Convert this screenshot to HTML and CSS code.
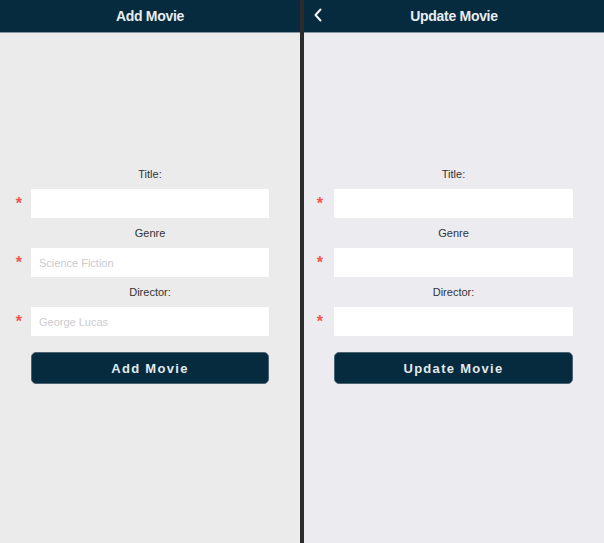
FILE: index.html
```html
<!DOCTYPE html>
<html>
<head>
<meta charset="utf-8">
<link rel="stylesheet" href="styles.css">
</head>
<body>
<div class="screens">
  <section class="panel panel-add">
    <header class="bar">
      <h1 class="bar-title">Add Movie</h1>
    </header>
    <form class="form">
      <label class="label">Title:</label>
      <div class="row"><span class="req">*</span><input class="field" type="text"></div>
      <label class="label">Genre</label>
      <div class="row"><span class="req">*</span><input class="field" type="text" placeholder="Science Fiction"></div>
      <label class="label">Director:</label>
      <div class="row"><span class="req">*</span><input class="field" type="text" placeholder="George Lucas"></div>
      <div class="row"><span></span><button class="btn" type="button">Add Movie</button></div>
    </form>
  </section>
  <div class="divider"></div>
  <section class="panel panel-update">
    <header class="bar">
      <svg class="back" width="10" height="14" viewBox="0 0 10 14"><path d="M7.5 1.5 L2.5 7 L7.5 12.5" fill="none" stroke="#f2f4f6" stroke-width="2" stroke-linecap="round" stroke-linejoin="round"/></svg>
      <h1 class="bar-title">Update Movie</h1>
    </header>
    <form class="form form-update">
      <label class="label">Title:</label>
      <div class="row"><span class="req">*</span><input class="field" type="text"></div>
      <label class="label">Genre</label>
      <div class="row"><span class="req">*</span><input class="field" type="text"></div>
      <label class="label">Director:</label>
      <div class="row"><span class="req">*</span><input class="field" type="text"></div>
      <div class="row"><span></span><button class="btn" type="button">Update Movie</button></div>
    </form>
  </section>
</div>
</body>
</html>
```

FILE: styles.css
```css
html, body {
  margin: 0;
  padding: 0;
  height: 100%;
}
body {
  font-family: "Liberation Sans", Arial, sans-serif;
  background: #2b2b2b;
}
.screens {
  display: flex;
  height: 543px;
  width: 604px;
}
.panel {
  width: 300px;
  display: flex;
  flex-direction: column;
}
.panel-add { background: #ebebeb; }
.panel-update { background: #ebebf0; }
.divider {
  width: 4px;
  background: #2b2b2b;
}
.bar {
  position: relative;
  height: 32px;
  background: #062a3e;
  border-bottom: 1px solid #8796a3;
  display: flex;
  align-items: center;
  justify-content: center;
}
.bar-title {
  margin: 0;
  font-size: 14px;
  font-weight: bold;
  color: #e9eef1;
  letter-spacing: -0.3px;
}
.back {
  position: absolute;
  left: 9px;
  top: 8px;
}
.form {
  display: flex;
  flex-direction: column;
  padding-top: 134px;
  margin: 0;
}
.label {
  display: block;
  width: 238px;
  margin-left: 31px;
  text-align: center;
  font-size: 11px;
  line-height: 14px;
  color: #333;
  margin-bottom: 8px;
}
.row {
  display: grid;
  grid-template-columns: 31px 238px;
  align-items: center;
  margin-bottom: 8px;
}
.form-update .row {
  grid-template-columns: 30px 239px;
}
.form-update .req {
  margin-right: 11px;
}
.form-update .label {
  margin-left: 30px;
  width: 239px;
}
.req {
  justify-self: end;
  margin-right: 9px;
  color: #f2564a;
  font-size: 16px;
  line-height: 10px;
  height: 10px;
  font-weight: bold;
  padding-top: 1px;
}
.field {
  box-sizing: border-box;
  width: 100%;
  height: 29px;
  border: none;
  background: #fff;
  padding: 0 8px;
  font-family: "Liberation Sans", Arial, sans-serif;
  font-size: 11px;
  outline: none;
}
.field::placeholder {
  color: #cbcbcf;
}
.btn {
  margin-top: 8px;
  box-sizing: border-box;
  width: 100%;
  height: 32px;
  background: #062a3e;
  border: 1px solid #4c6373;
  border-radius: 5px;
  color: #e3e9ed;
  font-family: "Liberation Sans", Arial, sans-serif;
  font-size: 13px;
  font-weight: bold;
  letter-spacing: 1.3px;
  padding: 0;
}
```
